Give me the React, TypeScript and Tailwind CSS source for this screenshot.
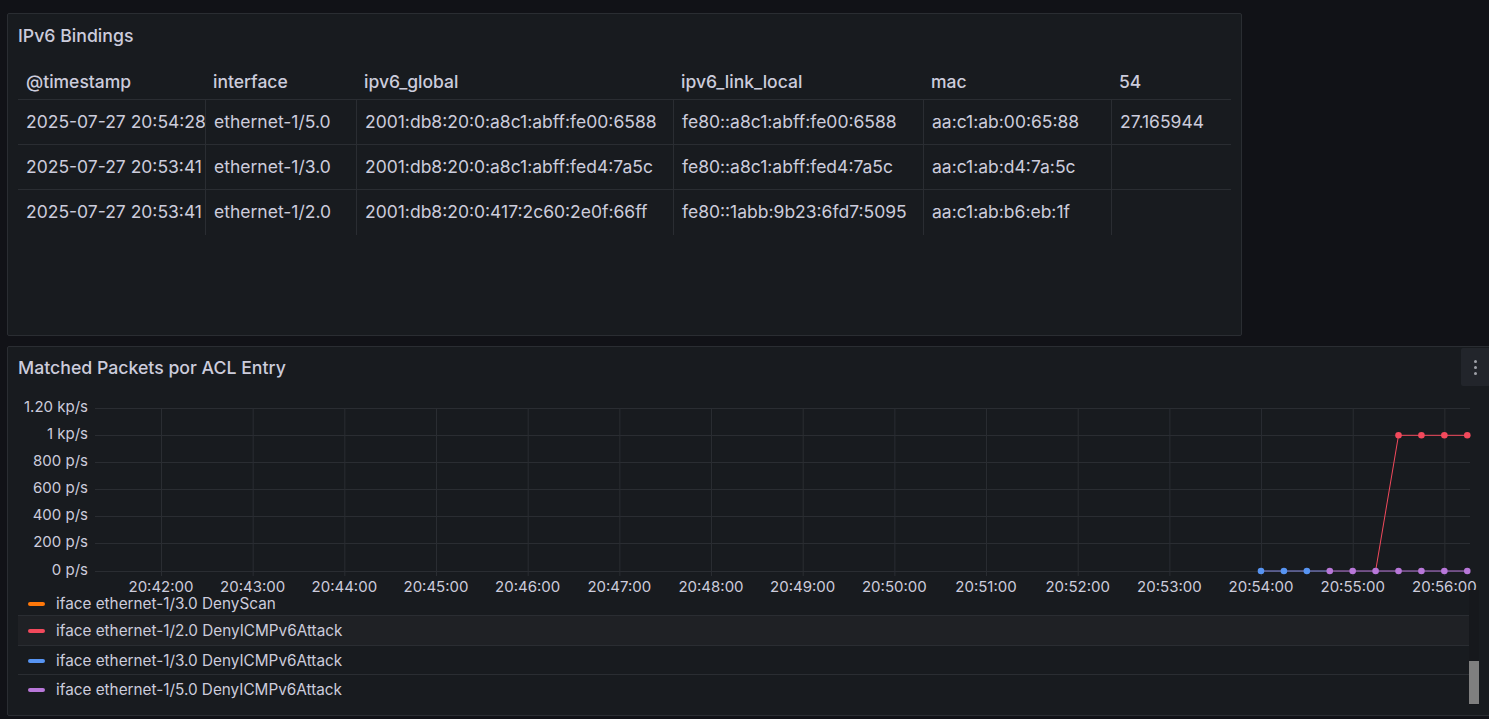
import React from 'react';

const rows = [
  ['2025-07-27 20:54:28', 'ethernet-1/5.0', '2001:db8:20:0:a8c1:abff:fe00:6588', 'fe80::a8c1:abff:fe00:6588', 'aa:c1:ab:00:65:88', '27.165944'],
  ['2025-07-27 20:53:41', 'ethernet-1/3.0', '2001:db8:20:0:a8c1:abff:fed4:7a5c', 'fe80::a8c1:abff:fed4:7a5c', 'aa:c1:ab:d4:7a:5c', ''],
  ['2025-07-27 20:53:41', 'ethernet-1/2.0', '2001:db8:20:0:417:2c60:2e0f:66ff', 'fe80::1abb:9b23:6fd7:5095', 'aa:c1:ab:b6:eb:1f', ''],
];

const headers = ['@timestamp', 'interface', 'ipv6_global', 'ipv6_link_local', 'mac', '54'];
const widths = ['w-[187px]', 'w-[151px]', 'w-[317px]', 'w-[250px]', 'w-[188px]', 'w-[120px]'];

const legend = [
  { label: 'iface ethernet-1/3.0 DenyScan', color: 'bg-[#ff780a]', row: 'h-[26px] pt-[2px] border-b' },
  { label: 'iface ethernet-1/2.0 DenyICMPv6Attack', color: 'bg-[#f2495c]', row: 'h-[30px] border-b bg-[#1f2125]' },
  { label: 'iface ethernet-1/3.0 DenyICMPv6Attack', color: 'bg-[#5794f2]', row: 'h-[29px] pt-[1px] border-b' },
  { label: 'iface ethernet-1/5.0 DenyICMPv6Attack', color: 'bg-[#b877d9]', row: 'h-[30px]' },
];

// chart coordinates are page coords shifted by (8, 390)
const OX = 8;
const OY = 390;
const yTicks = [
  { v: '1.20 kp/s', y: 408 },
  { v: '1 kp/s', y: 435 },
  { v: '800 p/s', y: 462 },
  { v: '600 p/s', y: 489 },
  { v: '400 p/s', y: 516 },
  { v: '200 p/s', y: 543 },
  { v: '0 p/s', y: 571 },
];
const xTicks = Array.from({ length: 15 }, (_, i) => ({
  x: 161 + i * 91.67,
  label: `20:${String(42 + i).padStart(2, '0')}:00`,
}));
const pts = Array.from({ length: 10 }, (_, i) => 1261 + i * 22.92);
const ZERO = 571;
const ONEK = 435.3;

function Chart() {
  const X = (x: number) => x - OX;
  const Y = (y: number) => y - OY;
  return (
    <svg width={1462} height={200} className="block overflow-visible" style={{ fontFamily: 'Inter, sans-serif' }}>
      {yTicks.map((t) => (
        <g key={t.v}>
          <line x1={X(95)} x2={X(1470)} y1={Y(t.y) + 0.5} y2={Y(t.y) + 0.5} stroke="#2a2d32" strokeWidth={1} />
          <text x={X(88)} y={Y(t.y)} textAnchor="end" dominantBaseline="middle" fontSize={15} fill="#ccccdc">
            {t.v}
          </text>
        </g>
      ))}
      {xTicks.map((t) => (
        <g key={t.label}>
          <line x1={X(t.x) + 0.5} x2={X(t.x) + 0.5} y1={Y(408)} y2={Y(576)} stroke="#2a2d32" strokeWidth={1} />
          <text x={X(t.x)} y={Y(588)} textAnchor="middle" dominantBaseline="middle" fontSize={15} fill="#ccccdc">
            {t.label}
          </text>
        </g>
      ))}
      {/* red series */}
      <polyline
        points={[
          `${X(pts[5])},${Y(ZERO)}`,
          ...pts.slice(6).map((x) => `${X(x)},${Y(ONEK)}`),
        ].join(' ')}
        fill="none"
        stroke="#f2495c"
        strokeWidth={1}
      />
      {pts.slice(6).map((x) => (
        <circle key={`r${x}`} cx={X(x)} cy={Y(ONEK)} r={3.3} fill="#f2495c" />
      ))}
      {/* blue series */}
      <line x1={X(pts[0])} x2={X(pts[3])} y1={Y(ZERO)} y2={Y(ZERO)} stroke="#8a8fe6" strokeWidth={1} />
      {/* purple series */}
      <line x1={X(pts[3])} x2={X(pts[9])} y1={Y(ZERO)} y2={Y(ZERO)} stroke="#b877d9" strokeWidth={1} />
      {pts.map((x, i) => (
        <circle key={`p${x}`} cx={X(x)} cy={Y(ZERO)} r={3.3} fill={i < 3 ? '#5794f2' : '#b877d9'} />
      ))}
    </svg>
  );
}

export default function App() {
  return (
    <div
      className="w-[1489px] h-[719px] overflow-hidden bg-[#111217] text-[#ccccdc] pt-[13px]"
      style={{ fontFamily: 'Inter, "Noto Sans", sans-serif' }}
    >
      {/* IPv6 Bindings panel */}
      <div className="ml-[7px] w-[1235px] h-[323px] bg-[#181b1f] border border-[#2a2d32] rounded-[2px]">
        <div className="h-[44px] flex items-center px-[10px] text-[17.7px] font-medium">IPv6 Bindings</div>
        <div className="mx-[10px] pt-[5px]">
          <div className="flex h-[37px] border-b border-[#2a2d32] text-[17.5px] font-medium">
            {headers.map((h, i) => (
              <div key={h} className={`${widths[i]} px-[8px] pt-[2px] flex items-center`}>
                {h}
              </div>
            ))}
          </div>
          {rows.map((r, ri) => (
            <div
              key={ri}
              className={`flex h-[45px] text-[17.5px] ${ri < rows.length - 1 ? 'border-b border-[#2a2d32]' : ''}`}
            >
              {r.map((c, ci) => (
                <div
                  key={ci}
                  className={`${widths[ci]} px-[8px] flex items-center overflow-hidden whitespace-nowrap ${ci > 0 ? 'border-l border-[#2a2d32]' : ''}`}
                >
                  {c}
                </div>
              ))}
            </div>
          ))}
        </div>
      </div>

      {/* Matched Packets panel */}
      <div className="relative mt-[10px] ml-[7px] w-[1492px] h-[370px] bg-[#181b1f] border border-[#2a2d32] rounded-[2px]">
        <div className="h-[43px] flex justify-between">
          <div className="pl-[10px] flex items-center text-[17.7px] font-medium">Matched Packets por ACL Entry</div>
          <button className="mt-[1px] mr-[8px] w-[29px] h-[38px] rounded-[2px] bg-[#22252b] flex flex-col items-center justify-center gap-[3px]">
            <span className="w-[3px] h-[3px] rounded-full bg-[#9fa1a8]" />
            <span className="w-[3px] h-[3px] rounded-full bg-[#9fa1a8]" />
            <span className="w-[3px] h-[3px] rounded-full bg-[#9fa1a8]" />
          </button>
        </div>
        <Chart />
        <div className="relative ml-[10px] w-[1451px] text-[15.3px] leading-[14px]">
          {legend.map((l) => (
            <div key={l.label} className={`${l.row} border-[#2a2d32] flex items-center`}>
              <span className={`ml-[10px] w-[17px] h-[4px] rounded-full ${l.color}`} />
              <span className="ml-[11px]">{l.label}</span>
            </div>
          ))}
          <div className="absolute left-[1451px] top-0 w-[10px] h-[115px] bg-[#16181c]">
            <div className="mt-[71px] h-[43px] bg-[#7f7f7f]" />
          </div>
        </div>
      </div>
    </div>
  );
}
